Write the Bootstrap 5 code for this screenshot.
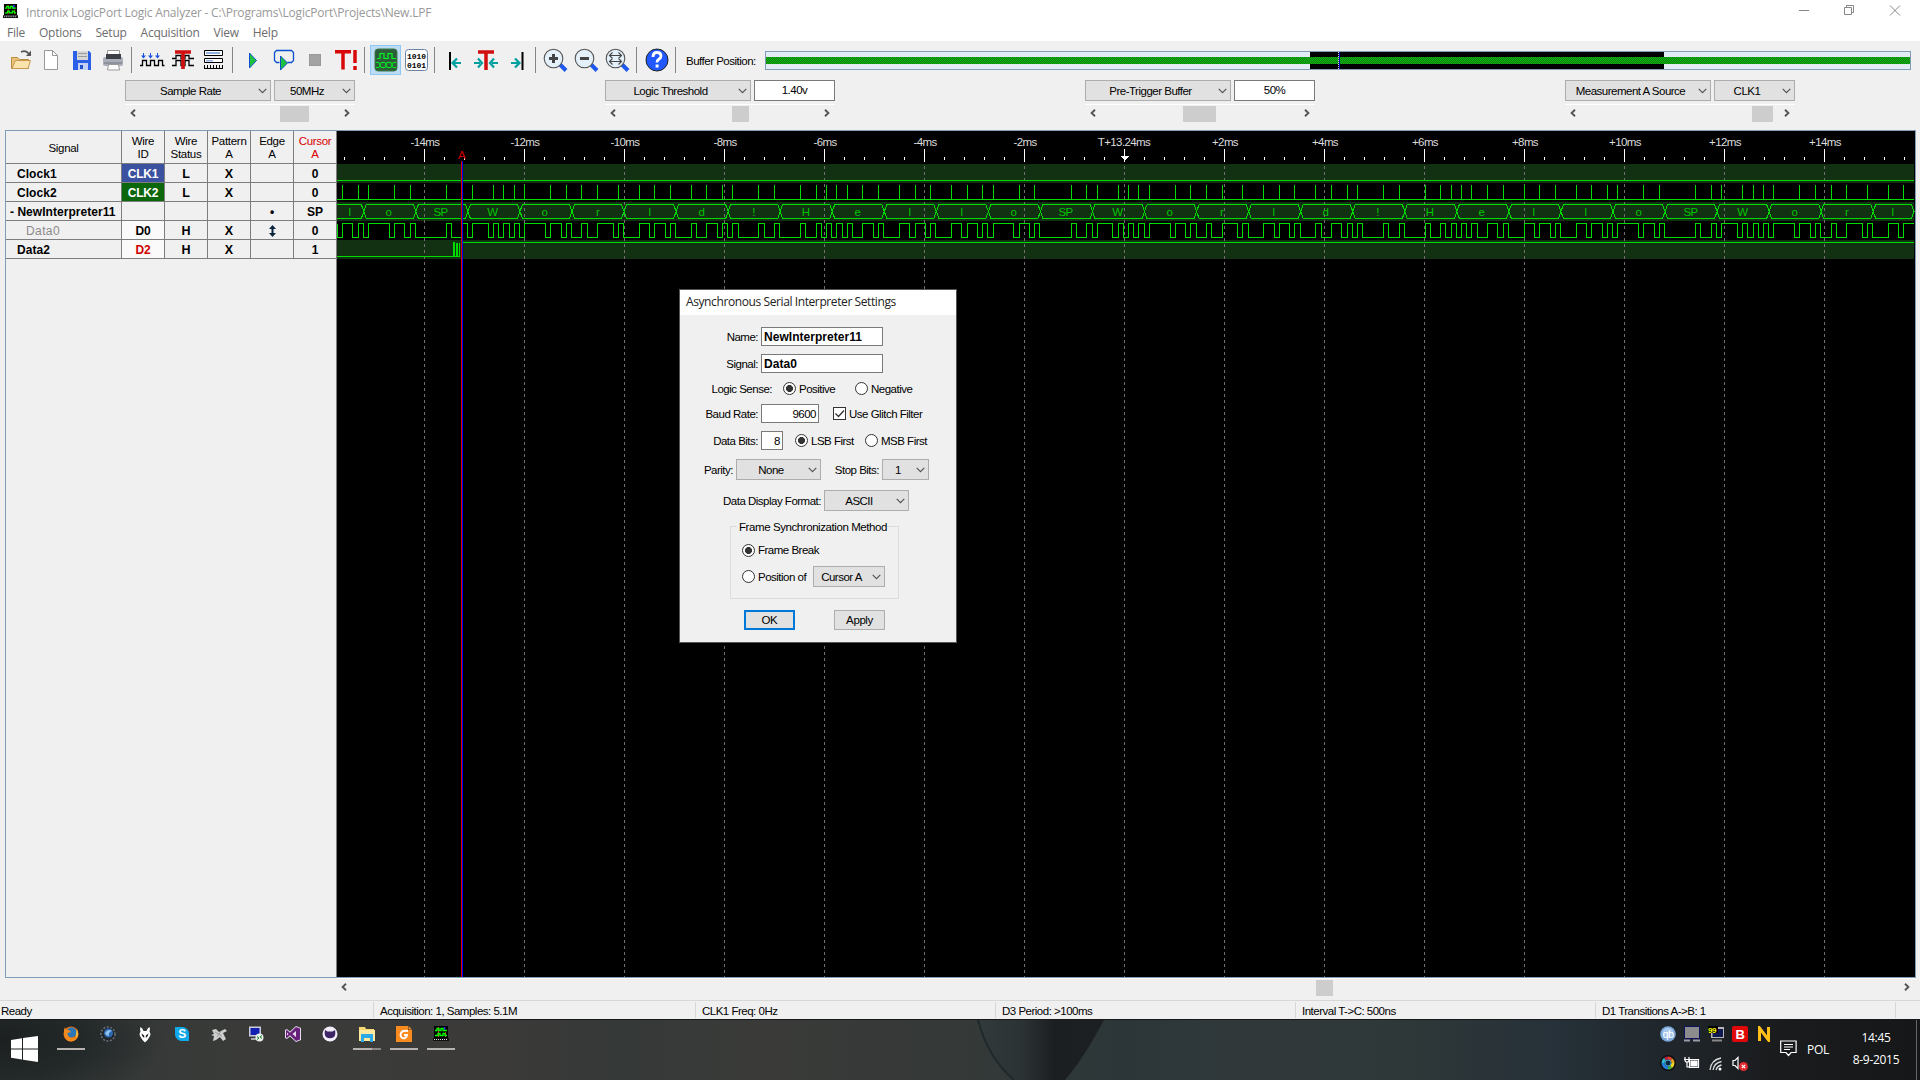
<!DOCTYPE html>
<html lang="en">
<head>
<meta charset="utf-8">
<title>Intronix LogicPort Logic Analyzer</title>
<link href="https://cdn.jsdelivr.net/npm/bootstrap@5.3.0/dist/css/bootstrap.min.css" rel="stylesheet">
<style>
:root{--ms:"Liberation Sans",sans-serif;--ui:"Open Sans","Noto Sans",sans-serif}
body{width:1920px;height:1080px;overflow:hidden;background:#f0f0f0;font:11.5px/14px var(--ms);letter-spacing:-.5px;color:#000}
svg{display:block}
.titlebar{height:25px;font:12px/25px var(--ui);color:#999;padding-left:3px}
.caption-text{margin-left:8px;letter-spacing:-.2px}
.caption-btns{margin-right:15px}
.menubar{height:16px;font:12px/16px var(--ui);color:#6d6d6d;letter-spacing:-.25px;padding-left:7px}
.menubar span{margin-right:14px}
.toolbar{height:39px;padding:4px 0 0 5px}
.tool{width:31px;height:30px;flex:none}
.tool-on{background:#bcdcf4;outline:1px solid #90c8f6;outline-offset:-1px}
.tsep{width:8px;height:26px;margin-top:2px;padding-left:2px;flex:none}
.tsep::before{content:"";display:block;width:1px;height:100%;background:#858585}
.buflabel{width:84px;padding:9px 0 0 5px;white-space:nowrap;flex:none}
.bufbar{width:1146px;height:19px;margin-top:6px;border:1px solid #7f9db9;background:#e3ebf3;flex:none}
.bufwin{left:544px;width:354px;height:17px;background:#000}
.bufgreen{left:0;right:0;top:5px;height:7px;background:repeating-conic-gradient(#00d000 0 25%,#1c641c 0 50%) 0 0/2px 2px}
.bufmark{left:572px;width:2px;height:17px;border-left:1px dotted #ddd;border-right:1px solid #0000c0}
.controls{height:50px;padding-left:125px}
.ctl{width:230px;margin-right:250px}
.combo{height:21px;background:#e1e1e1;border:1px solid #adadad;padding:1px 3px 0 0}
.combo>span{flex:1;text-align:center;padding-right:3px;white-space:nowrap}
.combo svg{width:9px;height:6px}
.edit{height:21px;background:#fff;border:1px solid #7a7a7a;text-align:center;line-height:18px}
.sbar{height:18px;border-top:1px solid #fff;margin-top:3px;padding:0 5px}
.sbar svg,.hscroll svg{margin-top:-2px}
.thumb{background:#cdcdcd;height:16px}
.mainpane{width:1911px;height:848px;margin-left:5px;border:1px solid #7f9db9}
.sigtable{width:331px;border-collapse:separate;border-spacing:0;table-layout:fixed}
.sigtable th,.sigtable td{border-right:1px solid #7d7d7d;border-bottom:1px solid #7d7d7d;padding:0;text-align:center;vertical-align:middle;overflow:hidden;white-space:nowrap}
.sigtable th{height:33px;font-weight:400;line-height:13px;padding-top:2px;letter-spacing:-.3px}
.sigtable td{height:19px;font:bold 12px/16px "Liberation Sans",sans-serif;letter-spacing:.04px;padding-top:2px}
.sigtable td:nth-child(2){letter-spacing:-.2px}
.sigtable td:nth-child(3),.sigtable td:nth-child(4){font-size:12.5px}
.sigtable td:first-child{text-align:left;padding-left:11px}
.sigside{width:331px;border-right:1px solid #7d7d7d}
.hscroll{height:18px;margin-left:337px;width:1578px;border-top:1px solid #fff;padding:0 5px 0 4px}
.statusbar{height:19px;margin-top:4px;border-top:1px solid #d7d7d7;padding-top:1px}
.statusbar div{width:300px;border-right:1px solid #d7d7d7;height:16px;padding:2px 0 0 6px;white-space:nowrap}
.dlg{left:679px;top:289px;width:278px;height:354px;border:1px solid #555;background:#f0f0f0}
.dlg-title{height:25px;background:#fff;font:12px/24px var(--ui);letter-spacing:-.4px;padding-left:6px;color:#222}
.dlg label,.dlg .lb{white-space:nowrap;line-height:14px}
.lb{text-align:right;margin-right:3px;padding-top:1px}
.tx{height:19px;background:#fff;border:1px solid #7a7a7a;padding:0 2px;line-height:18px}
.tx b{font:bold 12px/18px "Liberation Sans",sans-serif;letter-spacing:.04px}
.form-check-input{width:13px;height:13px;margin:0 3px 0 0;border:1px solid #333;flex:none;background-color:#fff}
.form-check-input:checked{background-color:#fff;border-color:#333}
.form-check-input:checked[type=radio]{background-image:radial-gradient(circle,#333 0 3.2px,transparent 3.8px)}
.form-check-input[type=checkbox]{border-radius:0!important}
.form-check-input:checked[type=checkbox]{background-image:linear-gradient(transparent,transparent)}
.tick{width:13px;height:13px;margin-left:-16px;margin-right:3px;position:relative}
.syncbox{width:169px;height:73px;margin:15px 0 0 50px;border:1px solid #dcdcdc;padding-left:11px}
.sync-title{height:14px;margin:-7px 0 0 -5px;background:#f0f0f0;width:150px;padding-left:2px;white-space:nowrap;letter-spacing:-.42px}
.dbtn{width:51px;height:20px;border:1px solid #adadad;background:#e1e1e1;text-align:center;line-height:18px;padding:0;border-radius:0;letter-spacing:-.4px}
.dbtn.first{border:2px solid #0078d7;line-height:16px}
.taskbar{height:61px;border-top:1px solid #17191a;color:#fff;font:12px/14px var(--ui);
background:radial-gradient(ellipse 220px 90px at 0 20px,#1c2021 0,#1f2425cc 40%,transparent 75%),linear-gradient(90deg,#303736 0,#3a3b39 250px,#3b3a38 500px,#353938 620px,#3a3b39 760px,#363938 900px,transparent 960px),linear-gradient(90deg,#3a3a38 0,#353a38 960px,#2c3638 1120px,#30383a 1250px,#2f3838 1400px,#263139 1550px,#20272c 1660px,#1a1b1d 1780px,#161718 1920px)}
.startbtn{width:52px;padding:16px 0 0 11px}
.task{width:37px;padding-top:5px}
.task svg{margin:0 auto;width:16px;height:18px}
.run::after{content:"";display:block;width:28px;height:2px;background:#b5b2af;margin:5px auto 0}
.run2::after{background:linear-gradient(90deg,#b5b2af 19px,#8a8784 19px)}
.tray{width:120px;row-gap:13px;padding-top:6px}
.tray svg{width:16px;height:16px;margin:0 4px}
.wv text{font-family:var(--ms);font-size:11.5px;text-anchor:middle;letter-spacing:-.6px}
</style>
</head>
<body>
<svg width="0" height="0" class="position-absolute">
<defs>
<linearGradient id="fold" x1="0" x2="1"><stop offset="0" stop-color="#333a3b"/><stop offset=".35" stop-color="#2b3234"/><stop offset=".6" stop-color="#1c1f21"/><stop offset="1" stop-color="#1d2022"/></linearGradient>
<symbol id="chev" viewBox="0 0 9 6"><path d="M.7.8 4.5 4.6 8.3.8" fill="none" stroke="#555" stroke-width="1.2"/></symbol>
<symbol id="al" viewBox="0 0 6 8"><path d="M5 .7 1.6 4 5 7.3" fill="none" stroke="#555" stroke-width="1.9"/></symbol>
<symbol id="ar" viewBox="0 0 6 8"><path d="M1 .7 4.4 4 1 7.3" fill="none" stroke="#555" stroke-width="1.9"/></symbol>
<symbol id="app" viewBox="0 0 16 16"><path d="M1 0h14v12H1z" fill="#000"/><path d="M0 12h16v3H0z" fill="#111"/><path d="M1 13.5h14" stroke="#ddd" stroke-dasharray="1 1"/><path d="M5.5 1v10M12.5 6v5" stroke="#e02020"/><path d="M11.500 1v4" stroke="#33f" stroke-width="1.500"/><path d="M2 4.500h2v-2h2v2h2v-2h2v2h4M2 9.500h3v-2h2v2h3v-2h2v2h2" fill="none" stroke="#0f0" stroke-width="1.300"/></symbol>
</defs></svg>

<header class="bg-white">
 <div class="titlebar d-flex">
  <svg width="15" height="15" class="mt-1"><use href="#app"/></svg>
  <span class="caption-text">Intronix LogicPort Logic Analyzer - C:\Programs\LogicPort\Projects\New.LPF</span>
  <svg class="caption-btns ms-auto" width="106" height="20" fill="none" stroke="#888"><path d="M0 10.500h10M45.500 7.500h7v7h-7zM47.500 7.500v-2h7v7h-2M91 5.500l10 10M101 5.500l-10 10"/></svg>
 </div>
 <nav class="menubar d-flex"><span>File</span><span>Options</span><span>Setup</span><span>Acquisition</span><span>View</span><span>Help</span></nav>
</header>

<div class="toolbar d-flex align-items-start">
 <svg class="tool"><path d="M6.500 23.500v-11h6l2 2h9v9z" fill="#e9c27a" stroke="#b98a3c"/><path d="M7 23.500l3.500-8h15l-2.500 8z" fill="#fbe3ae" stroke="#c59a50"/><path d="M16 7q5-2.500 8 2" fill="none" stroke="#555" stroke-width="1.500"/><path d="M26 5.500v5.500h-5z" fill="#555"/></svg>
 <svg class="tool"><path d="M8.500 5.500h8l5 5v14h-13z" fill="#fff" stroke="#999"/><path d="M16.500 5.500v5h5" fill="none" stroke="#999"/></svg>
 <svg class="tool"><path d="M6 6h16l2 2v17H6z" fill="#2b5fe8"/><path d="M10 6h11v9H10z" fill="#d7d7d7"/><path d="M11 8.500h9M11 11.500h9" stroke="#999"/><path d="M11 18h10v7H11z" fill="#c3d2f4"/><path d="M13 20h3v4h-3z" fill="#2450c8"/></svg>
 <svg class="tool"><path d="M9.500 5.500h12v8h-12z" fill="#fff" stroke="#999"/><rect x="5" y="12" width="20" height="9" rx="2" fill="#a9aeb8"/><path d="M8 9h15v5H8z" fill="#3c4046"/><path d="M6 18h18" stroke="#70757d"/><path d="M10.500 19.500h10l1 5.500h-12z" fill="#fff" stroke="#999"/></svg>
 <i class="tsep"></i>
 <svg class="tool" fill="none"><path d="M3 20.500h2.500v-5h4v5h4v-5h4v5h4v-5h4v5h2" stroke="#000" stroke-width="1.300"/><path d="M6.500 8v4M13.500 8v4M20.500 8v4" stroke="#1a4fe0"/><path d="M4 10.500h5l-2.500 3zM11 10.500h5l-2.500 3zM18 10.500h5l-2.500 3z" fill="#1a4fe0"/></svg>
 <svg class="tool" fill="none"><path d="M4 13.500h4v-3h5v3h4v-3h4v3h5M4 20.500h4v-5h5v5h4v-5h4v5h5" stroke="#000" stroke-width="1.300"/><path d="M7 7h16M15 7v17" stroke="#d01010" stroke-width="3.600"/></svg>
 <svg class="tool"><path d="M5.500 5.500h18v5h-18zM5.500 13.500h18v4h-18z" fill="#fff" stroke="#000"/><path d="M7 7h14v2H7zM7 15h7v1.500H7z" fill="#8fb0e0"/><path d="M5 23.500h19" stroke="#000"/><path d="M5 21.500h19" stroke="#000" stroke-width="3" stroke-dasharray="1 2"/></svg>
 <i class="tsep"></i>
 <svg class="tool"><path d="M11.500 8v15l7-7.500z" fill="#1fc23c" stroke="#0b4fd0"/></svg>
 <svg class="tool"><path d="M10.500 17.500h-3l-2-2v-8l2-2h15l2 2v8l-2 2h-4" fill="none" stroke="#0b4fd0" stroke-width="1.300"/><path d="M11.500 11v14l7-7z" fill="#1fc23c" stroke="#0b4fd0"/></svg>
 <svg class="tool"><rect x="9.500" y="9.500" width="11" height="11" fill="#a3a3a3" stroke="#999"/></svg>
 <svg class="tool" stroke="#d80808" stroke-width="3.500"><path d="M4 6.800h16M12 7v17.500"/><path d="M24 5v13M24 21v4"/></svg>
 <i class="tsep"></i>
 <svg class="tool tool-on"><rect x="5" y="4" width="22" height="22" rx="3" fill="#2c5c38" stroke="#3a7848"/><path d="M7 13.500h3v-5h4v5h4v-5h4v5h4" fill="none" stroke="#0f2" stroke-width="1.200"/><path d="M6 17.500h3l2 5h4l2-5h4l2 5h3M6 22.500h3l2-5h4l2 5h4l2-5h3" fill="none" stroke="#0e2"/></svg>
 <svg class="tool"><rect x="4.500" y="4.500" width="22" height="21" rx="3" fill="#fff" stroke="#6d85a5"/><g text-anchor="middle" font-size="8" font-weight="bold" font-family="Liberation Mono,monospace" letter-spacing="0"><text x="15.500" y="13.500">1010</text><text x="15.500" y="22.500">0101</text></g></svg>
 <i class="tsep"></i>
 <svg class="tool"><path d="M10 7v18" stroke="#000" stroke-width="2"/><path d="M21 18h-7M17 13.500 12.500 18l4.500 4.500" fill="none" stroke="#00a0a0" stroke-width="2.200"/></svg>
 <svg class="tool"><path d="M3 18h6M7 13.500 11 18l-4 4.500M27 18h-6M23 13.500 19 18l4 4.500" fill="none" stroke="#00a0a0" stroke-width="2.200"/><path d="M7 7h16M15 7v18" stroke="#d01010" stroke-width="3.500"/></svg>
 <svg class="tool"><path d="M20.500 7v18" stroke="#000" stroke-width="2"/><path d="M9 18h7M13 13.500l4.500 4.500-4.500 4.500" fill="none" stroke="#00a0a0" stroke-width="2.200"/></svg>
 <i class="tsep"></i>
 <svg class="tool"><path d="M19 19.500l6 6" stroke="#1f58f0" stroke-width="4"/><circle cx="12.500" cy="13.500" r="9.300" fill="#e4f1fa" stroke="#555" stroke-width="1.100"/><path d="M12.500 9v9M8 13.500h9" stroke="#444" stroke-width="3"/></svg>
 <svg class="tool"><path d="M19 19.500l6 6" stroke="#1f58f0" stroke-width="4"/><circle cx="12.500" cy="13.500" r="9.300" fill="#e4f1fa" stroke="#555" stroke-width="1.100"/><path d="M8 13.500h9" stroke="#444" stroke-width="3"/></svg>
 <svg class="tool"><path d="M19 19.500l6 6" stroke="#1f58f0" stroke-width="4"/><circle cx="12.500" cy="13.500" r="9.300" fill="#e4f1fa" stroke="#555" stroke-width="1.100"/><path d="M7 10.500h11M7 16.500h11M9.500 7.500l-3 3 3 3M15.500 7.500l3 3-3 3M9.500 13.500l-3 3 3 3M15.500 13.500l3 3-3 3" fill="none" stroke="#444" stroke-width="1.100"/></svg>
 <i class="tsep"></i>
 <svg class="tool"><circle cx="15" cy="15" r="11" fill="#2158ff" stroke="#222"/><path d="M11 12q0-4.500 4-4.500t4 3.500q0 2-2.500 3.500-1.500 1-1.500 3" fill="none" stroke="#fff" stroke-width="2.800"/><path d="M13.600 19.500h3v3h-3z" fill="#fff"/></svg>
 <i class="tsep"></i>
 <div class="buflabel">Buffer Position:</div>
 <div class="bufbar position-relative"><div class="bufwin position-absolute"></div><div class="bufgreen position-absolute"></div><div class="bufmark position-absolute"></div></div>
</div>

<div class="controls d-flex" id="controls"></div>

<main class="mainpane d-flex">
 <div class="sigside">
 <table class="sigtable">
  <colgroup><col style="width:116px"><col style="width:43px"><col style="width:43px"><col style="width:43px"><col style="width:43px"><col style="width:43px"></colgroup>
  <tr><th>Signal</th><th>Wire<br>ID</th><th>Wire<br>Status</th><th>Pattern<br>A</th><th>Edge<br>A</th><th style="color:#d80000">Cursor<br>A</th></tr>
  <tr><td>Clock1</td><td style="background:#3a52a0;color:#fff">CLK1</td><td>L</td><td>X</td><td></td><td>0</td></tr>
  <tr><td>Clock2</td><td style="background:#0c660c;color:#fff">CLK2</td><td>L</td><td>X</td><td></td><td>0</td></tr>
  <tr><td class="ps-1">-&nbsp;NewInterpreter11</td><td></td><td></td><td></td><td>•</td><td>SP</td></tr>
  <tr><td style="padding-left:20px;color:#8a8a8a;font-weight:400;letter-spacing:.4px">Data0</td><td style="background:#fafafa">D0</td><td>H</td><td>X</td><td><svg class="mx-auto" width="7" height="12"><path d="M3.500 0 7 4H4.500v4H7L3.500 12 0 8h2.500V4H0z" fill="#0a2540"/></svg></td><td>0</td></tr>
  <tr><td>Data2</td><td style="background:#fafafa;color:#d00000">D2</td><td>H</td><td>X</td><td></td><td>1</td></tr>
 </table>
 </div>
 <svg class="wv" id="wave" width="1578" height="846" viewBox="337 131 1578 846" shape-rendering="crispEdges"></svg>
</main>

<div class="hscroll d-flex align-items-center">
 <svg width="6" height="8"><use href="#al"/></svg><div class="thumb" style="width:17px;margin-left:969px"></div><svg class="ms-auto" width="6" height="8"><use href="#ar"/></svg>
</div>

<footer class="statusbar d-flex">
 <div style="width:374px;padding-left:1px">Ready</div><div style="width:322px">Acquisition: 1, Samples: 5.1M</div><div>CLK1 Freq: 0Hz</div><div>D3 Period: &gt;100ms</div><div>Interval T-&gt;C: 500ns</div><div>D1 Transitions A-&gt;B: 1</div>
</footer>

<div class="taskbar d-flex position-relative">
 <svg class="position-absolute" style="left:960px;top:0" width="200" height="60"><path d="M18 0h126Q124 38 105 60H54Q28 38 18 0z" fill="url(#fold)"/><path d="M18 0Q28 38 54 60" fill="none" stroke="#1f282b" stroke-width="2"/></svg>
 <div class="startbtn"><svg width="27" height="26" fill="#fff"><path d="M0 4 11 2.200V12.500H0zM12 2 27 0v12.500H12zM0 13.500h11v10L0 21.700zM12 13.500h15V26l-15-2.300z"/></svg></div>
 <div class="task run"><svg viewBox="0 0 16 18"><circle cx="8" cy="9" r="7.500" fill="#e8701a"/><circle cx="8.500" cy="7.500" r="5" fill="#2b78b8"/><path d="M1 5Q0 16 8 16.500 15 16 15.500 8q-2 5-6 5-5 0-5-5 2-1 4-.5Q6 4 3 4.500L2 2z" fill="#f08a1e"/><path d="M14 4q2 5-1 9 0-5 1-9z" fill="#fbd64a"/></svg></div>
 <div class="task"><svg viewBox="0 0 16 18"><circle cx="8" cy="9" r="7" fill="#22262c" stroke="#6a727c" stroke-width="1.500" stroke-dasharray="2 1.500"/><circle cx="8.500" cy="8" r="4.500" fill="#2b68b0"/><path d="M5 8q3-5 7-2-4 1-3 5-3 0-4-3z" fill="#8fc0ee"/></svg></div>
 <div class="task"><svg viewBox="0 0 16 18"><path d="M3.500 2q2 1 3 4h3q1-3 3-4 1 2 0 4.500 1.500 2 .5 4.500-2 4-5 6.500-3-2.500-5-6.500-1-2.500.5-4.500-1-2.500 0-4.500z" fill="#fff"/><path d="M4.500 8.500l2.700 2v2.500q-2.500-1-2.700-4.500zM11.500 8.500l-2.700 2v2.500q2.500-1 2.700-4.500z" fill="#222"/></svg></div>
 <div class="task"><svg viewBox="0 0 16 18"><path d="M1 2h7q7 1 7 8v6H9q-7 0-8-8z" fill="#10a8e8"/><circle cx="8" cy="9" r="7" fill="#10a8e8"/><text x="8" y="13.300" font-family="Liberation Sans,sans-serif" font-size="12" font-weight="bold" text-anchor="middle" fill="#fff">S</text></svg></div>
 <div class="task"><svg viewBox="0 0 16 18"><path d="M1 5l4-1 3 3 6-3 2 2-4 2 3 6-3 2-3-4-4 3-3 1 1-5-3-1 3-1z" fill="#cfcfcf"/><path d="M4 7l7 4M10 6l-4 6" stroke="#999"/></svg></div>
 <div class="task"><svg viewBox="0 0 16 18"><path d="M1 1.500h12v10H1z" fill="#ccd"/><path d="M2.500 3h9v7h-9z" fill="#1420b0"/><path d="M3 13h8v2H3z" fill="#aaa"/><circle cx="11.500" cy="12.500" r="4" fill="#e8efe8"/><path d="M9 11.500l2 1.500-2 1.500M14 10.500l-2 1.500 2 1.500" fill="none" stroke="#198a28"/></svg></div>
 <div class="task"><svg viewBox="0 0 16 18"><path d="M11 1l5 2v12l-5 2-6-5.500L2 14l-2-1V5l2-1 3 2.500z" fill="#e8ddf0"/><path d="M11 2l4 1.500v11L11 16l-6-5.700L2 13l-1-.6V5.600L2 5l3 2.700zM11 6v6L7.500 9zM2 7.500v3L3.500 9z" fill="#68217a" fill-rule="evenodd"/></svg></div>
 <div class="task"><svg viewBox="0 0 16 18"><circle cx="8" cy="9" r="7.500" fill="#f3eefb"/><path d="M3 5l2.500 1.500h5L13 5q1 5-1 7-4 2.500-8 0-2-2-1-7z" fill="#3d2466"/></svg></div>
 <div class="task run run2"><svg viewBox="0 0 16 18"><path d="M0 2h6l1 2h8v12H0z" fill="#f8d775"/><path d="M0 5h16v11H0z" fill="#ffe9a0"/><path d="M2 9h12v8h-3v-4H5v4H2z" fill="#2ba9e8"/></svg></div>
 <div class="task run"><svg viewBox="0 0 16 18"><path d="M0 1h12v4h4v12H0z" fill="#f88a1e"/><path d="M12.500 1 16 4.500h-3.500z" fill="#f88a1e"/><path d="M12 6Q5 4.500 4.500 10q.5 4 4.500 3 2-1 2-3H8" fill="none" stroke="#fff" stroke-width="2"/></svg></div>
 <div class="task run"><svg viewBox="0 -1 16 18"><use href="#app" width="16" height="16"/></svg></div>
 <div class="tray d-flex flex-wrap align-content-start ms-auto flex-shrink-0">
  <svg><circle cx="8" cy="8" r="7.800" fill="#7aa6d8"/><circle cx="8" cy="7" r="5.500" fill="#a8c8ec"/><text x="8" y="11.500" font-family="Liberation Sans,sans-serif" font-size="11" text-anchor="middle" fill="#fff">qb</text></svg>
  <svg><path d="M.5.500h15v12H.5z" fill="#8c8c8c" stroke="#101060"/><path d="M0 14.500h6M9 14.500h7" stroke="#99a" stroke-width="2"/></svg>
  <svg><path d="M3 1h13v11H3z" fill="#b8b8b8"/><path d="M4.500 3H15v8H4.500z" fill="#101a50"/><path d="M4 14.500h10" stroke="#888" stroke-width="2"/><path d="M0 0h10v7H0z" fill="#000"/><text x="0" y="6.800" font-family="Liberation Sans,sans-serif" font-size="8" font-weight="bold" fill="#ff0">99</text></svg>
  <svg><rect width="16" height="16" rx="2" fill="#e00808"/><text x="8" y="12.500" font-family="Liberation Sans,sans-serif" font-size="13" font-weight="bold" text-anchor="middle" fill="#fff">B</text></svg>
  <svg><path d="M3.500 15V2l9 12V1" fill="none" stroke="#ffc01a" stroke-width="3"/></svg>
  <svg fill="none"><circle cx="8" cy="8" r="6" stroke="#111" stroke-width="4"/><g stroke-width="3"><path d="M8 3a5 5 0 0 1 3.500 1.500" stroke="#e04030"/><path d="M11.500 4.500A5 5 0 0 1 13 8" stroke="#e8a020"/><path d="M13 8a5 5 0 0 1-2 4" stroke="#e8d820"/><path d="M11 12a5 5 0 0 1-3 1" stroke="#40b040"/><path d="M8 13a5 5 0 0 1-5-5" stroke="#2080e0"/><path d="M3 8a5 5 0 0 1 2-4" stroke="#30b8c8"/><path d="M5 4a5 5 0 0 1 3-1" stroke="#b02040"/></g><circle cx="8" cy="8" r="3" fill="#0b2540" stroke="#4aa8d8"/></svg>
  <svg fill="none" stroke="#fff" stroke-width="1.200"><path d="M5.500 4.500h9v8h-9zM1 2v3q0 2 2 2t2-2V2M3 7v5h2M0 4.500h6"/><path d="M7 6h6v5H7z" fill="#fff"/></svg>
  <svg fill="none" stroke="#ddd" stroke-width="1.300"><path d="M2 15Q3 5 13 3M5 15Q6 8 13.500 6.500M8 15q1-4 5.500-5"/><circle cx="12" cy="14" r="1.500" fill="#fff" stroke="none"/></svg>
  <svg><path d="M1 5.500h2l3-3v11l-3-3H1z" fill="none" stroke="#fff" stroke-width="1.200"/><circle cx="11.500" cy="11.500" r="4.500" fill="#e02a30"/><path d="M9.800 9.800l3.400 3.400M13.200 9.800l-3.400 3.400" stroke="#fff" stroke-width="1.200"/></svg>
 </div>
 <svg width="17" height="17" class="ms-1 flex-shrink-0" style="margin-top:20px" fill="none" stroke="#fff" stroke-width="1.200"><path d="M.7 1h15.400v11.500h-5L8.500 15.500 6 12.500H.7zM4 4.500h9M4 7h9M4 9.500h6"/></svg>
 <div style="margin:23px 0 0 10px;width:25px;letter-spacing:-.3px">POL</div>
 <div class="text-center" style="width:84px;line-height:22px;padding:7px 0 0 4px;letter-spacing:-.3px">14:45<br>8-9-2015</div>
 <div style="border-left:1px solid #666;width:4px"></div>
</div>

<section class="dlg position-absolute">
 <div class="dlg-title">Asynchronous Serial Interpreter Settings</div>
 <div class="d-flex align-items-center" style="margin-top:12px"><span class="lb" style="width:78px">Name:</span><div class="tx" style="width:122px"><b>NewInterpreter11</b></div></div>
 <div class="d-flex align-items-center" style="margin-top:8px"><span class="lb" style="width:78px">Signal:</span><div class="tx" style="width:122px"><b>Data0</b></div></div>
 <div class="d-flex align-items-center" style="margin-top:8px"><span class="lb" style="width:92px">Logic Sense:</span><label class="d-flex align-items-center" style="margin-left:8px;width:72px"><input class="form-check-input" type="radio" name="s" checked>Positive</label><label class="d-flex align-items-center"><input class="form-check-input" type="radio" name="s">Negative</label></div>
 <div class="d-flex align-items-center" style="margin-top:8px"><span class="lb" style="width:78px">Baud Rate:</span><div class="tx text-end" style="width:58px">9600</div><label class="d-flex align-items-center" style="margin-left:14px"><input class="form-check-input" type="checkbox" checked><svg class="tick"><path d="M2.500 6.500l3 3 5.500-6" fill="none" stroke="#333" stroke-width="1.300"/></svg>Use Glitch Filter</label></div>
 <div class="d-flex align-items-center" style="margin-top:8px"><span class="lb" style="width:78px">Data Bits:</span><div class="tx text-end" style="width:22px">8</div><label class="d-flex align-items-center" style="margin-left:12px;width:70px"><input class="form-check-input" type="radio" name="b" checked>LSB First</label><label class="d-flex align-items-center"><input class="form-check-input" type="radio" name="b">MSB First</label></div>
 <div class="d-flex align-items-center" style="margin-top:9px"><span class="lb" style="width:53px">Parity:</span><div class="combo d-flex align-items-center" style="width:85px"><span>None</span><svg><use href="#chev"/></svg></div><span class="lb" style="width:58px">Stop Bits:</span><div class="combo d-flex align-items-center" style="width:47px"><span>1</span><svg><use href="#chev"/></svg></div></div>
 <div class="d-flex align-items-center" style="margin-top:10px"><span class="lb" style="width:141px">Data Display Format:</span><div class="combo d-flex align-items-center" style="width:85px"><span>ASCII</span><svg><use href="#chev"/></svg></div></div>
 <div class="syncbox"><div class="sync-title">Frame Synchronization Method</div>
  <label class="d-flex align-items-center" style="margin-top:9px"><input class="form-check-input" type="radio" name="f" checked>Frame Break</label>
  <div class="d-flex align-items-center" style="margin-top:9px"><label class="d-flex align-items-center" style="width:71px"><input class="form-check-input" type="radio" name="f">Position of</label><div class="combo d-flex align-items-center" style="width:72px"><span>Cursor A</span><svg><use href="#chev"/></svg></div></div>
 </div>
 <div class="d-flex" style="margin:11px 0 0 64px;gap:39px"><button class="dbtn first">OK</button><button class="dbtn">Apply</button></div>
</section>

<script>
// Control strip: label combo, value box, slider thumb offset and width
const chev='<svg><use href="#chev"/></svg>';
document.getElementById('controls').innerHTML=[
 ['Sample Rate','50MHz',1,155,29],['Logic Threshold','1.40v',0,127,17],['Pre-Trigger Buffer','50%',0,98,33],['Measurement A Source','CLK1',1,187,21]
].map(([a,b,sel,off,w])=>`<div class="ctl"><div class="d-flex" style="gap:3px"><div class="combo d-flex align-items-center" style="width:146px"><span>${a}</span>${chev}</div>${sel?`<div class="combo d-flex align-items-center" style="width:81px"><span>${b}</span>${chev}</div>`:`<div class="edit" style="width:81px">${b}</div>`}</div><div class="sbar position-relative d-flex align-items-center"><svg width="6" height="8"><use href="#al"/></svg><div class="thumb" style="width:${w}px;margin-left:${off-11}px"></div><svg class="ms-auto" width="6" height="8"><use href="#ar"/></svg></div></div>`).join('');

// Waveforms: 20 us per pixel, 9600 baud serial text
let s='<rect x="337" y="131" width="1578" height="846" fill="#000"/>';
for(const y of [164,202,240]) s+=`<rect x="337" y="${y}" width="1577" height="19" fill="#123012"/>`;
for(let x=344;x<1914;x+=20){const maj=(x-324)%100===0;
 s+=`<path d="M${x+.5} ${maj?149:157}V${maj?162:160}" stroke="#fff"/>`;
 if(maj) s+=`<path d="M${x+.5} 166V977" stroke="#707070" stroke-dasharray="3 3"/>`;}
for(let i=-7;i<=7;i++) s+=`<text x="${1124+i*100+(i?1:0)}" y="146" fill="#ddd">${i?(i>0?'+':'')+2*i+'ms':'T+13.24ms'}</text>`;
s+='<path d="M1120 156h9l-4.500 4.500z" fill="#fff"/>';
const msg='lo World!Hello World!Hello Worl',W=52.05,B=W/10,X0=363.3-W,R=1913;
const px=v=>Math.min(R,Math.max(337,Math.floor(v)))+.5;
let data='',clk='M337 199.500H1914',hex='',prev=null;
[...msg].forEach((c,n)=>{
 const b=X0+n*W,code=c.charCodeAt(0),bits=[0,...Array.from({length:8},(_,k)=>code>>k&1),1];
 bits.forEach((v,k)=>{const x=b+k*B; if(x+B<337||x>R) return;
  const y=v?223.5:237.5;
  if(prev===null) data=`M${px(x)} ${y}`; else if(v!==prev){data+=`H${px(x)}V${y}`; if(v) clk+=`M${px(x)} 185V199`;}
  prev=v;});
 const l=Math.max(b,334),r=Math.min(b+W,R+.5),m=211.5;
 hex+=`M${l+3} 204.500L${l+.5} ${m}L${l+3} 218.500H${r-2}L${r+.5} ${m}L${r-2} 204.500Z`;
 s+=`<text x="${Math.round((Math.max(b,337)+r)/2)-.5}" y="216" fill="#00c400">${c===' '?'SP':c}</text>`;
});
data+='H1914';
s+=`<g fill="none" stroke="#00dc00"><path d="M337 180.500H1914"/><path d="${clk}"/><path d="${data}"/><path d="${hex}"/><path d="M337 256.500H460M462 242.500H1914M456.500 242.500V256M457.500 242.500V256M459.500 242.500V256"/><path d="M454 242V256" stroke-width="2"/></g>`;
s+='<path d="M461.500 161V977" stroke="#e00000"/><path d="M462.500 161V977" stroke="#0000ff"/><text x="461.500" y="159" fill="#d00000">A</text>';
document.getElementById('wave').innerHTML=s;
</script>
<script src="https://cdn.jsdelivr.net/npm/bootstrap@5.3.0/dist/js/bootstrap.bundle.min.js"></script>
</body>
</html>
